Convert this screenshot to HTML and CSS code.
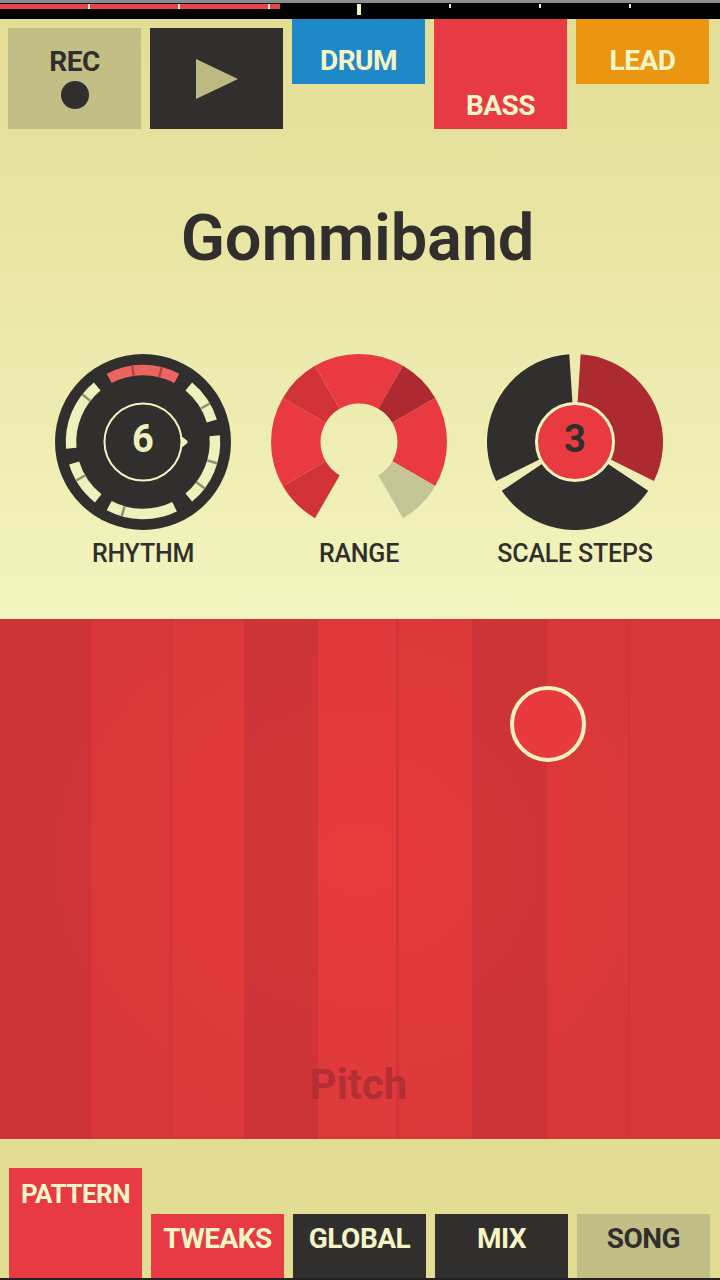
FILE: index.html
```html
<!DOCTYPE html>
<html lang="en">
<head>
  <meta charset="UTF-8" />
  <title>Gommiband</title>
  <link rel="stylesheet" href="styles.css">
</head>
<body>

<div class="timeline">
  <span class="tick"></span><span class="tick"></span><span class="tick"></span>
  <span class="tick tick-big"></span>
  <span class="tick tick-small"></span><span class="tick tick-small"></span><span class="tick tick-small"></span>
</div>

<header class="top">
  <nav class="top-nav">
    <button class="btn btn-rec">REC<span class="rec-dot"></span></button>
    <button class="btn btn-play" aria-label="Play"><span class="play-tri"></span></button>
    <button class="tab tab-drum">DRUM</button>
    <button class="tab tab-bass">BASS</button>
    <button class="tab tab-lead">LEAD</button>
  </nav>

  <h1 class="title">Gommiband</h1>

  <div class="dials">
    <!-- Rhythm -->
    <figure class="dial">
      <svg viewBox="-88 -88 176 176" width="176" height="176">
        <circle r="88" fill="#302f2d"/>
        <g transform="rotate(-90)" fill="none" stroke-width="10.5">
          <circle class="seg-red" r="72" pathLength="360" stroke-dasharray="56 304" transform="rotate(-28)"/>
          <circle class="seg-cream" r="72" pathLength="360" stroke-dasharray="33.5 326.5" transform="rotate(39.5)"/>
          <circle class="seg-cream" r="72" pathLength="360" stroke-dasharray="55.5 304.5" transform="rotate(85)"/>
          <circle class="seg-cream" r="72" pathLength="360" stroke-dasharray="54 306" transform="rotate(154)"/>
          <circle class="seg-cream" r="72" pathLength="360" stroke-dasharray="34.5 325.5" transform="rotate(218.5)"/>
          <circle class="seg-cream" r="72" pathLength="360" stroke-dasharray="55.5 304.5" transform="rotate(265)"/>
        </g>
        <g stroke="#8f9070" stroke-width="2.5">
          <line x1="0" y1="-77" x2="0" y2="-67" transform="rotate(60)"/>
          <line x1="0" y1="-77" x2="0" y2="-67" transform="rotate(106)"/>
          <line x1="0" y1="-77" x2="0" y2="-67" transform="rotate(127)"/>
          <line x1="0" y1="-77" x2="0" y2="-67" transform="rotate(196)"/>
          <line x1="0" y1="-77" x2="0" y2="-67" transform="rotate(240)"/>
          <line x1="0" y1="-77" x2="0" y2="-67" transform="rotate(308)"/>
        </g>
        <g stroke="#b8403f" stroke-width="2.5">
          <line x1="0" y1="-77" x2="0" y2="-67" transform="rotate(-8)"/>
          <line x1="0" y1="-77" x2="0" y2="-67" transform="rotate(14)"/>
        </g>
        <path d="M37 -7 L44.5 -1 L44.5 1 L37 7 Z" fill="#f3f3c0"/>
        <circle r="38.5" fill="#302f2d" stroke="#f3f3c0" stroke-width="2"/>
        <text class="dial-num dial-num-light" y="10">6</text>
      </svg>
      <figcaption>RHYTHM</figcaption>
    </figure>

    <!-- Range -->
    <figure class="dial">
      <svg viewBox="-88 -88 176 176" width="176" height="176">
        <g transform="rotate(-90)" fill="none" stroke-width="49.5">
          <circle stroke="#d23338" r="63.25" pathLength="360" stroke-dasharray="30 330" transform="rotate(210)"/>
          <circle stroke="#e83a40" r="63.25" pathLength="360" stroke-dasharray="60 300" transform="rotate(240)"/>
          <circle stroke="#d23338" r="63.25" pathLength="360" stroke-dasharray="30 330" transform="rotate(300)"/>
          <circle stroke="#e83a40" r="63.25" pathLength="360" stroke-dasharray="60 300" transform="rotate(330)"/>
          <circle stroke="#ac2a30" r="63.25" pathLength="360" stroke-dasharray="30 330" transform="rotate(30)"/>
          <circle stroke="#e83a40" r="63.25" pathLength="360" stroke-dasharray="60 300" transform="rotate(60)"/>
          <circle stroke="#c4c596" r="63.25" pathLength="360" stroke-dasharray="30 330" transform="rotate(120)"/>
        </g>
      </svg>
      <figcaption>RANGE</figcaption>
    </figure>

    <!-- Scale steps -->
    <figure class="dial">
      <svg viewBox="-88 -88 176 176" width="176" height="176">
        <g transform="rotate(-90)" fill="none" stroke-width="50">
          <circle stroke="#ac2a30" r="63" pathLength="360" stroke-dasharray="112.6 247.4" transform="rotate(3.7)"/>
          <circle stroke="#302f2d" r="63" pathLength="360" stroke-dasharray="112.6 247.4" transform="rotate(123.7)"/>
          <circle stroke="#302f2d" r="63" pathLength="360" stroke-dasharray="112.6 247.4" transform="rotate(243.7)"/>
        </g>
        <circle r="38.5" fill="#e83a40" stroke="#f3f3c0" stroke-width="3"/>
        <text class="dial-num" y="10">3</text>
      </svg>
      <figcaption>SCALE STEPS</figcaption>
    </figure>
  </div>
</header>

<main class="pad">
  <div class="col col-1"></div>
  <div class="col col-2"></div>
  <div class="col col-3"></div>
  <div class="col col-4"></div>
  <div class="col col-5"></div>
  <div class="col col-6"></div>
  <div class="col col-7"></div>
  <div class="col col-8"></div>
  <div class="col col-9"></div>
  <span class="handle"></span>
  <span class="pad-label">Pitch</span>
</main>

<footer class="bottom">
  <button class="tab tab-pattern">PATTERN</button>
  <button class="tab tab-red">TWEAKS</button>
  <button class="tab tab-dark">GLOBAL</button>
  <button class="tab tab-dark">MIX</button>
  <button class="tab tab-khaki">SONG</button>
</footer>

</body>
</html>
```

FILE: styles.css
```css
* {
  box-sizing: border-box;
}

body {
  margin: 0;
  width: 720px;
  height: 1280px;
  overflow: hidden;
  display: flex;
  flex-direction: column;
  background: #e3dd95;
  color: #302f2d;
  font-family: Roboto, "Noto Sans", sans-serif;
}

button {
  border: none;
  padding: 0;
  font: inherit;
  font-weight: 700;
}

/* Timeline strip */
.timeline {
  height: 19px;
  flex: none;
  display: flex;
  align-items: flex-start;
  background-color: #000;
  background-image: linear-gradient(#e8434a, #e8434a);
  background-repeat: no-repeat;
  background-position: 0 1px;
  background-size: 280px 5px;
  border-top: 3px solid #8c8c8c;
  padding-top: 1px;
}

.tick {
  width: 90px;
  height: 5px;
  border-right: 2px solid #f3f3c0;
}

.tick-big {
  height: 11px;
  border-right-width: 4px;
  width: 91px;
}

.tick-small {
  height: 4px;
}

/* Upper panel */
.top {
  height: 600px;
  flex: none;
  background: linear-gradient(#e3dd95, #f3f4bf);
}

.top-nav {
  display: flex;
  gap: 9px;
  align-items: flex-start;
  padding-left: 8px;
  height: 110px;
}

.btn, .tab {
  width: 133px;
  display: flex;
  flex-direction: column;
  align-items: center;
  font-size: 28px;
  line-height: 1;
  letter-spacing: -0.5px;
}

.btn {
  height: 101px;
  margin-top: 9px;
}

.btn-rec {
  background: #c2bf86;
  color: #302f2d;
  padding-top: 20px;
}

.rec-dot {
  width: 28px;
  height: 28px;
  margin-top: 5px;
  border-radius: 50%;
  background: #302f2d;
}

.btn-play {
  background: #302f2d;
  justify-content: center;
}

.play-tri {
  width: 0;
  height: 0;
  border-left: 42px solid #bdb983;
  border-top: 20px solid transparent;
  border-bottom: 20px solid transparent;
}

.tab {
  color: #f6f5c6;
  justify-content: flex-end;
}

.tab-drum {
  height: 65px;
  background: #1f88c6;
  padding-bottom: 9px;
}

.tab-bass {
  height: 110px;
  background: #e83a44;
  padding-bottom: 9px;
}

.tab-lead {
  height: 65px;
  background: #ea9610;
  padding-bottom: 9px;
}

.title {
  margin: 76px 0 0;
  height: 66px;
  padding-right: 5px;
  text-align: center;
  font-size: 65px;
  line-height: 66px;
  font-weight: 600;
  letter-spacing: -0.2px;
}

/* Dials */
.dials {
  display: flex;
  margin-top: 83px;
  padding-left: 35px;
}

.dial {
  width: 216px;
  margin: 0;
  display: flex;
  flex-direction: column;
  align-items: center;
}

.dial svg {
  display: block;
}

.dial figcaption {
  margin-top: 9px;
  font-size: 25px;
  line-height: 30px;
  font-weight: 500;
  letter-spacing: -0.2px;
}

.seg-red {
  stroke: #ea6560;
}

.seg-cream {
  stroke: #eff1bd;
}

.dial-num {
  font-size: 38px;
  font-weight: 700;
  text-anchor: middle;
  fill: #302f2d;
}

.dial-num-light {
  fill: #f0f0bc;
}

/* Pitch pad */
.pad {
  position: relative;
  height: 520px;
  flex: none;
  display: grid;
  grid-template-columns: 91px 78px 75px 74px 78px 76px 75px 81px 92px;
  background: #dd393c;
}

.col {
  background-image: radial-gradient(ellipse 340px 300px at var(--cx, 50%) 46%, rgba(235, 60, 60, var(--glow, 0.75)), rgba(235, 60, 60, 0));
}

.col-1 { --cx: 360px; --glow: 0.3; background-color: #cd3438; }
.col-2 { --cx: 269px; background-color: #d83739; }
.col-3 { --cx: 191px; background-color: #da383a; border-left: 4px solid #d43539; }
.col-4 { --cx: 116px; --glow: 0.2; background-color: #cc3437; }
.col-5 { --cx: 42px; background-color: #dd393b; }
.col-6 { --cx: -36px; background-color: #da383a; border-left: 3px solid #d23438; }
.col-7 { --cx: -112px; --glow: 0.2; background-color: #cc3437; }
.col-8 { --cx: -187px; background-color: #d73739; }
.col-9 { --cx: -268px; background-color: #d63739; border-left: 2px solid #d23538; }

.handle {
  position: absolute;
  left: 510px;
  top: 67px;
  width: 76px;
  height: 76px;
  border-radius: 50%;
  background: #e8393e;
  border: 4px solid #f7f3bf;
}

.pad-label {
  position: absolute;
  left: 0;
  right: 3px;
  bottom: 32px;
  text-align: center;
  font-size: 42px;
  line-height: 44px;
  font-weight: 700;
  color: #b32f34;
}

/* Bottom tabs */
.bottom {
  flex: 1;
  display: flex;
  gap: 9px;
  align-items: flex-end;
  padding-left: 9px;
  background: #e3dd93;
  border-bottom: 2px solid #222;
}

.bottom .tab {
  justify-content: flex-start;
  height: 64px;
  padding-top: 11px;
}

.bottom .tab-pattern {
  height: 110px;
  background: #e83a44;
  padding-top: 13px;
  font-size: 26px;
}

.tab-red {
  background: #e83a44;
}

.tab-dark {
  background: #302f2d;
}

.bottom .tab-khaki {
  background: #c2bf86;
  color: #302f2d;
}
```
